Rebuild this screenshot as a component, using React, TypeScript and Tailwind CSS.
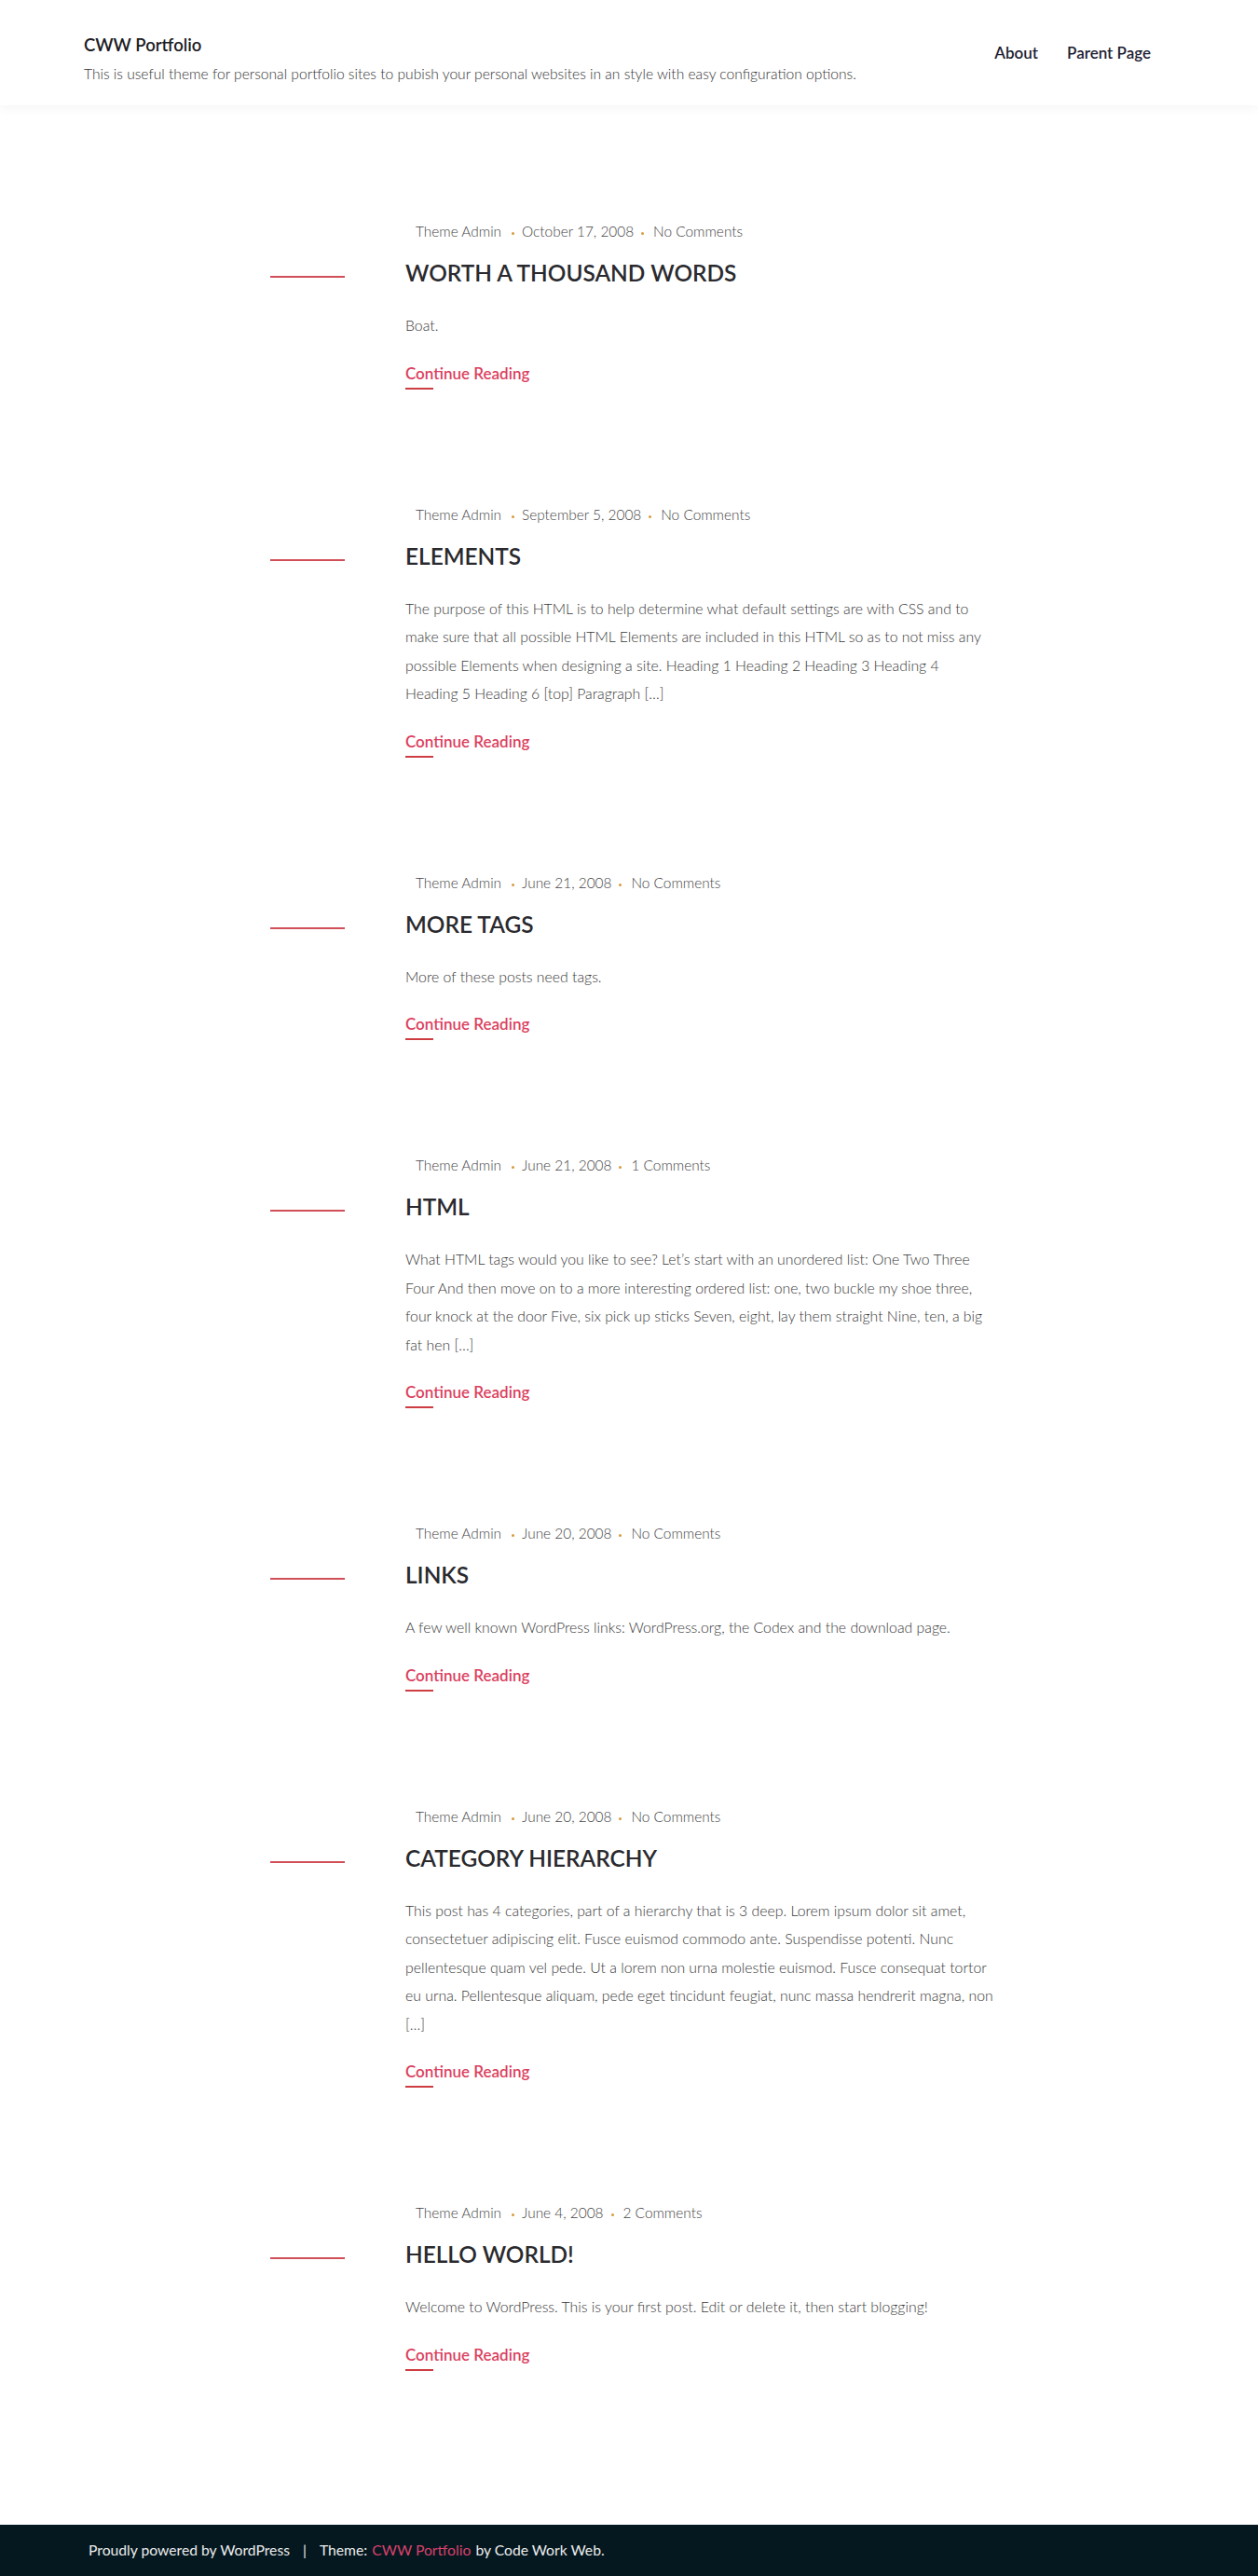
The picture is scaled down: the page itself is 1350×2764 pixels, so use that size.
import React from "react";

type Post = {
  date: string;
  comments: string;
  title: string;
  lines: string[];
};

const posts: Post[] = [
  {
    date: "October 17, 2008",
    comments: "No Comments",
    title: "WORTH A THOUSAND WORDS",
    lines: ["Boat."],
  },
  {
    date: "September 5, 2008",
    comments: "No Comments",
    title: "ELEMENTS",
    lines: [
      "The purpose of this HTML is to help determine what default settings are with CSS and to",
      "make sure that all possible HTML Elements are included in this HTML so as to not miss any",
      "possible Elements when designing a site. Heading 1 Heading 2 Heading 3 Heading 4",
      "Heading 5 Heading 6 [top] Paragraph […]",
    ],
  },
  {
    date: "June 21, 2008",
    comments: "No Comments",
    title: "MORE TAGS",
    lines: ["More of these posts need tags."],
  },
  {
    date: "June 21, 2008",
    comments: "1 Comments",
    title: "HTML",
    lines: [
      "What HTML tags would you like to see? Let’s start with an unordered list: One Two Three",
      "Four And then move on to a more interesting ordered list: one, two buckle my shoe three,",
      "four knock at the door Five, six pick up sticks Seven, eight, lay them straight Nine, ten, a big",
      "fat hen […]",
    ],
  },
  {
    date: "June 20, 2008",
    comments: "No Comments",
    title: "LINKS",
    lines: [
      "A few well known WordPress links: WordPress.org, the Codex and the download page.",
    ],
  },
  {
    date: "June 20, 2008",
    comments: "No Comments",
    title: "CATEGORY HIERARCHY",
    lines: [
      "This post has 4 categories, part of a hierarchy that is 3 deep. Lorem ipsum dolor sit amet,",
      "consectetuer adipiscing elit. Fusce euismod commodo ante. Suspendisse potenti. Nunc",
      "pellentesque quam vel pede. Ut a lorem non urna molestie euismod. Fusce consequat tortor",
      "eu urna. Pellentesque aliquam, pede eget tincidunt feugiat, nunc massa hendrerit magna, non",
      "[…]",
    ],
  },
  {
    date: "June 4, 2008",
    comments: "2 Comments",
    title: "HELLO WORLD!",
    lines: [
      "Welcome to WordPress. This is your first post. Edit or delete it, then start blogging!",
    ],
  },
];

function Dot() {
  return <span className="block shrink-0 w-[3px] h-[3px] rounded-full bg-[#d59a3c] mt-[3px]" />;
}

function Article({ post }: { post: Post }) {
  return (
    <article className="flex flex-col">
      <div className="pl-[171px] pt-[2px] flex items-center h-[26px] text-[15.4px] font-light text-[#444] whitespace-nowrap">
        <span>Theme Admin</span>
        <span className="ml-[11px] mr-[8px]">
          <Dot />
        </span>
        <span>{post.date}</span>
        <span className="ml-[8px] mr-[10px]">
          <Dot />
        </span>
        <span>{post.comments}</span>
      </div>
      <div className="mt-[14px] flex items-center">
        <div className="w-[160px] shrink-0 pl-[15px] pt-[8px]">
          <div className="w-[80px] h-[2px] bg-[#d14f58]" />
        </div>
        <h2 className="text-[24.4px] leading-[36px] font-semibold text-[#2a2a2e] whitespace-nowrap">
          {post.title}
        </h2>
      </div>
      <p className="pl-[160px] mt-[23px] text-[15.8px] leading-[30.5px] font-light text-[#383838] whitespace-nowrap">
        {post.lines.map((l, i) => (
          <React.Fragment key={i}>
            {l}
            {i < post.lines.length - 1 && <br />}
          </React.Fragment>
        ))}
      </p>
      <div className="pl-[160px] mt-[24px] flex flex-col items-start">
        <a className="text-[17px] leading-[24px] font-semibold text-[#db3f5e]">Continue Reading</a>
        <span className="mt-[3px] w-[30px] h-[2px] bg-[#cd3d42]" />
      </div>
    </article>
  );
}

export default function App() {
  return (
    <div className="min-h-[2764px] flex flex-col bg-white font-['Lato',sans-serif]">
      <header className="h-[113px] px-[90px] flex items-start justify-between shadow-[0_3px_12px_rgba(0,0,0,0.045)] relative z-10">
        <div className="flex flex-col pt-[34px]">
          <div className="text-[18.5px] leading-[28px] font-semibold text-[#1c1c24]">CWW Portfolio</div>
          <div className="mt-[6px] text-[15.6px] leading-[22px] font-light text-[#333] whitespace-nowrap">
            This is useful theme for personal portfolio sites to pubish your personal websites in an style with easy configuration options.
          </div>
        </div>
        <nav className="self-center flex items-center gap-[31px] pr-[25px] text-[17px] font-semibold text-[#1d1d33]">
          <a>About</a>
          <a>Parent Page</a>
        </nav>
      </header>
      <main className="flex-1 pt-[122px] pb-[47px]">
        <div className="w-[800px] mx-auto flex flex-col gap-[121px]">
          {posts.map((p, i) => (
            <Article key={i} post={p} />
          ))}
        </div>
      </main>
      <footer className="h-[55px] bg-[#051820] px-[95px] flex items-center text-[15.7px] text-[#ececec] whitespace-nowrap">
        <span>Proudly powered by WordPress</span>
        <span className="mx-[14px]">|</span>
        <span>Theme:</span>
        <span className="ml-[5px] text-[#d8416b]">CWW Portfolio</span>
        <span className="ml-[5px]">by Code Work Web.</span>
      </footer>
    </div>
  );
}
